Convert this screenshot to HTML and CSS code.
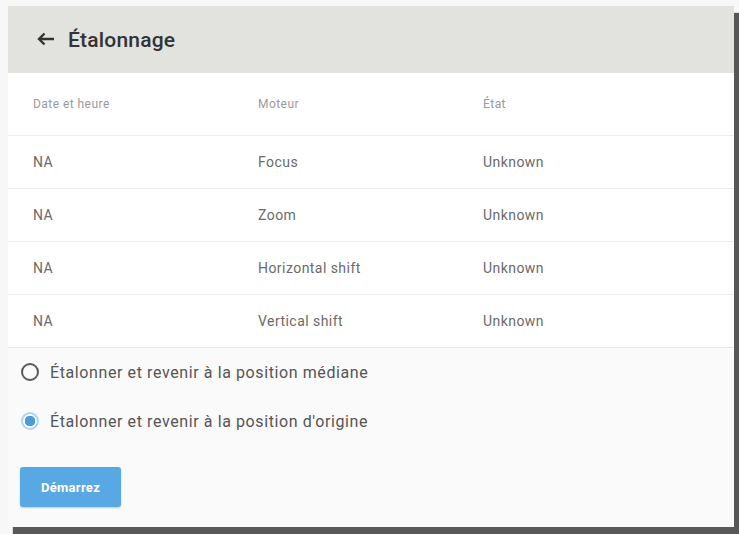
FILE: index.html
```html
<!DOCTYPE html>
<html lang="fr">
<head>
    <meta charset="UTF-8">
    <meta name="viewport" content="width=device-width, initial-scale=1.0">
    <title>Étalonnage</title>
    <link rel="stylesheet" href="styles.css">
</head>
<body>
    <div class="dialog">
        <div class="dialog-header">
            <svg class="back" width="18" height="14" viewBox="0 0 18 14">
                <path d="M17 7H2M7.5 1.5L2 7l5.5 5.5" fill="none" stroke="#333" stroke-width="2.4"/>
            </svg>
            <h1>Étalonnage</h1>
        </div>
        <table class="calib">
            <tr>
                <th class="col">Date et heure</th>
                <th class="col">Moteur</th>
                <th>État</th>
            </tr>
            <tr><td>NA</td><td>Focus</td><td>Unknown</td></tr>
            <tr><td>NA</td><td>Zoom</td><td>Unknown</td></tr>
            <tr><td>NA</td><td>Horizontal shift</td><td>Unknown</td></tr>
            <tr><td>NA</td><td>Vertical shift</td><td>Unknown</td></tr>
        </table>
        <div class="options">
            <label class="option">
                <span class="radio"></span>
                Étalonner et revenir à la position médiane
            </label>
            <label class="option">
                <span class="radio checked"></span>
                Étalonner et revenir à la position d'origine
            </label>
            <button class="start">Démarrez</button>
        </div>
    </div>
</body>
</html>
```

FILE: styles.css
```css
html, body { margin: 0; height: 100%; }
body { font-family: Roboto, "Noto Sans", sans-serif; background-color: #f7f7f7; padding: 6px 0 0 8px; box-sizing: border-box; overflow: hidden; }
.dialog { width: 726px; height: 521px; background-color: #fafafa; display: flex; flex-direction: column; box-shadow: 5px 7px 1px #585858; }
.dialog-header { height: 67px; background-color: #e2e2df; display: flex; align-items: center; padding-left: 29px; gap: 13px; color: #333; }
.back { flex: none; margin-top: -1px; }
.dialog-header h1 { font-size: 21px; font-weight: 500; letter-spacing: 0.2px; margin: 0; }
.calib { border-collapse: collapse; width: 100%; background-color: #fff; table-layout: fixed; }
.calib .col { width: 200px; }
.calib th, .calib td { text-align: left; padding: 0 0 0 25px; letter-spacing: 0.45px; }
.calib th { height: 62px; font-size: 12px; font-weight: 400; color: #9a9a9a; }
.calib td { height: 52px; border-top: 1px solid #ececec; font-size: 14px; color: #6a6a6a; }
.calib tr:last-child td { border-bottom: 1px solid #e6e6e6; }
.options { padding: 12px 0 0 13px; }
.option { display: flex; align-items: center; gap: 11px; height: 24px; margin-bottom: 25px; font-size: 16px; letter-spacing: 0.6px; color: #555; }
.radio { width: 14px; height: 14px; border: 2px solid #595959; border-radius: 50%; box-sizing: content-box; flex: none; }
.radio.checked { border-color: #a8d6f4; background: radial-gradient(circle, #4d9cd8 0, #4d9cd8 5px, #fff 5.5px); }
.start { margin: 9px 0 0 -1px; width: 101px; height: 40px; border: none; border-radius: 3px; background-color: #58a9e3; color: #fff; font-family: inherit; font-size: 13px; font-weight: 700; letter-spacing: 0.3px; box-shadow: 0 1px 2px rgba(0,0,0,0.2); }
```
